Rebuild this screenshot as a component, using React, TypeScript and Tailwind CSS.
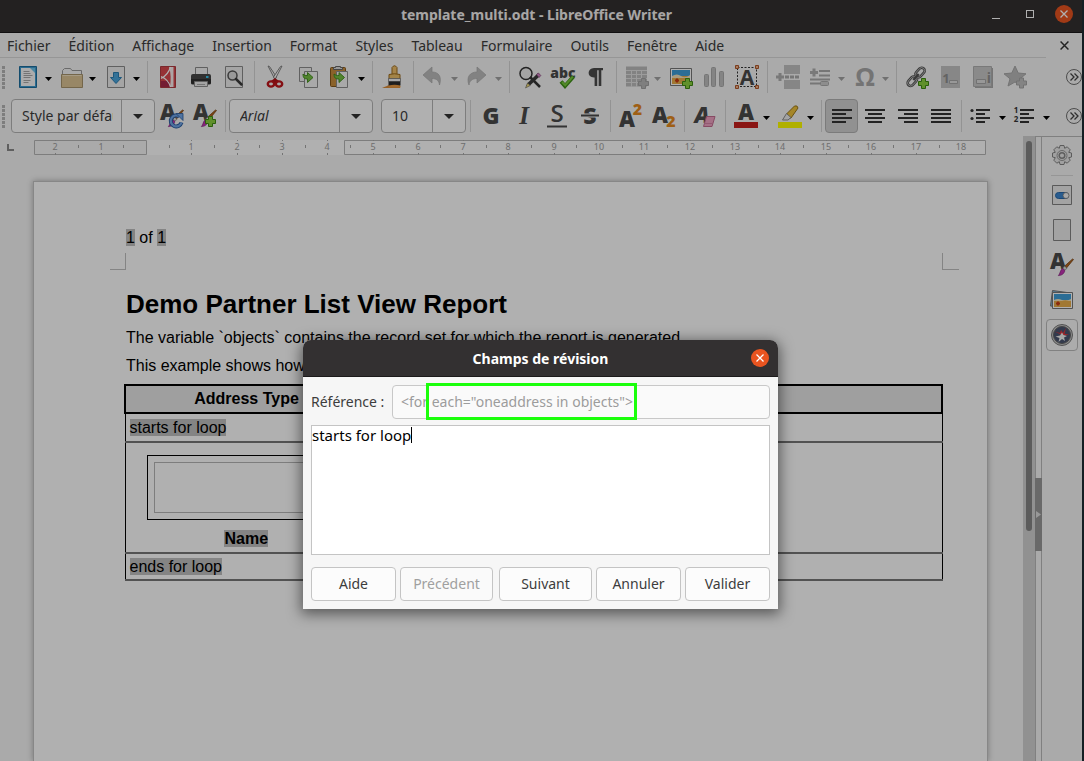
import React, { ReactNode } from 'react';

const INK = '#4a4a4a';

function Icon({ children }: { children: ReactNode }) {
  return (
    <svg width="24" height="24" viewBox="0 0 24 24" fill="none" className="shrink-0 overflow-visible" aria-hidden="true">
      {children}
    </svg>
  );
}

function Glyph({ x, y, size, fill = INK, italic = false, weight = 700, children }: {
  x: number; y: number; size: number; fill?: string; italic?: boolean; weight?: number; children: string;
}) {
  return (
    <text x={x} y={y} fontSize={size} fill={fill} fontWeight={weight} fontStyle={italic ? 'italic' : 'normal'} textAnchor="middle" fontFamily="'Open Sans', 'Noto Sans', sans-serif">
      {children}
    </text>
  );
}

function Plus({ x, y, fill = '#8bd13f', stroke = '#3f8a14' }: { x: number; y: number; fill?: string; stroke?: string }) {
  return (
    <path transform={`translate(${x} ${y})`} d="M3.5.5h4v3h3v4h-3v3h-4v-3h-3v-4h3z" fill={fill} stroke={stroke} />
  );
}

function Brush() {
  return (
    <g>
      <path d="M23.5 6.5l-7 8.5-2-1.8 8-7.2z" fill="#b8651b" stroke="#6b3a0c" strokeWidth=".7" />
      <path d="M14.5 13l2.5 2.2-2 2-2.4-2z" fill="#ddd" stroke="#666" strokeWidth=".6" />
      <path d="M12.6 15.6l2.3 2c-1 4-4 4.800-6.600 5 2-1.500 1.500-5.500 4.300-7z" fill="#c433b5" stroke="#7b1f72" strokeWidth=".6" />
    </g>
  );
}

const icons: Record<string, ReactNode> = {
  new: (
    <Icon>
      <path d="M3.500 1.500h17v21h-17z" fill="#3f9bd0" stroke="#1d6f9f" />
      <path d="M5 3h10l4 4v14H5z" fill="#fafafa" />
      <path d="M14 3h5v5z" fill="#6fc4ea" />
      <path d="M7.500 6.500h6M7.500 8.500h7M7.500 10.500h9M7.500 12.500h7M7.500 15.500h7M7.500 17.500h5" stroke="#a8a8a8" />
    </Icon>
  ),
  open: (
    <Icon>
      <path d="M2.500 20V5.500l2-2h6l1.500 2h9.500V20z" fill="#f5f5f5" stroke="#9a9a9a" />
      <path d="M1.500 9.500h21v13h-21z" fill="#dcc494" stroke="#a8946c" />
      <path d="M2.500 10.500h19" stroke="#efe0c0" />
    </Icon>
  ),
  save: (
    <Icon>
      <path d="M3.500 1.500h17v21h-17z" fill="#efefef" stroke="#8c8c8c" />
      <path d="M9.500 7.500h5v5h3L12 18.500 6.500 12.500h3z" fill="#4aa5dc" stroke="#2a7eb3" />
    </Icon>
  ),
  pdf: (
    <Icon>
      <path d="M4.500 1.500h15v21h-15z" fill="#d9484d" stroke="#b03c42" />
      <path d="M5 16h8l1 6H5z" fill="#a92b4a" />
      <path d="M13 2h4v20h-3C15 15 15 8 13 2z" fill="#fbeeee" />
      <path d="M17.500 2v20" stroke="#e79a9c" />
      <path d="M5 13.500C10 11 13 7 14.500 2M5 11.500c5 2 8 5 9.500 10.500" stroke="#fff" strokeWidth="1.200" />
    </Icon>
  ),
  print: (
    <Icon>
      <path d="M6.500 2.500h12v8h-12z" fill="#f3f3f3" stroke="#8b8b8b" />
      <rect x="2" y="9" width="20" height="10" rx="2" fill="#474747" />
      <path d="M2 14h20v4q0 1.500-2 1.500H4q-2 0-2-1.500z" fill="#303030" />
      <rect x="17" y="11" width="2.500" height="2" fill="#3cc7ef" />
      <path d="M5.500 16.500h13v5h-13z" fill="#ededed" stroke="#8d8d8d" />
      <path d="M8 19.500h8" stroke="#aaa" />
    </Icon>
  ),
  preview: (
    <Icon>
      <path d="M3.500 1.500h17v21h-17z" fill="#efefef" stroke="#8c8c8c" />
      <circle cx="10.500" cy="10.500" r="4.500" fill="#dedede" stroke="#555" strokeWidth="1.500" />
      <path d="M14 14l5.500 5.500" stroke="#3c3c3c" strokeWidth="2.500" strokeLinecap="round" />
    </Icon>
  ),
  cut: (
    <Icon>
      <path d="M5 1l7 13.500 1.500-2.500L6.500 1.500z" fill="#eee" stroke="#777" strokeWidth=".9" />
      <path d="M19 1l-7 13.500L10.500 12l7-10.500z" fill="#fafafa" stroke="#777" strokeWidth=".9" />
      <path d="M8 16l4-3 4 3-2 2h-4z" fill="#b21319" />
      <ellipse cx="8" cy="19" rx="3.200" ry="2.600" stroke="#c0161c" strokeWidth="2.400" />
      <ellipse cx="16" cy="19" rx="3.200" ry="2.600" stroke="#c0161c" strokeWidth="2.400" />
    </Icon>
  ),
  copy: (
    <Icon>
      <path d="M3.500 2.500h12v14h-12z" fill="#f2f2f2" stroke="#8d8d8d" />
      <path d="M8.500 6.500h13v16h-13z" fill="#f5f5f5" stroke="#8d8d8d" />
      <path d="M7 9c0 4 1.500 5 4.500 5v3.500l5.500-5-5.500-5v3C9 10.500 8.500 10.500 7 9z" fill="#76c043" stroke="#3d8a17" strokeWidth=".9" />
    </Icon>
  ),
  paste: (
    <Icon>
      <rect x="1.500" y="2.500" width="15" height="19" rx="1" fill="#c98e3e" stroke="#85571c" />
      <path d="M4.500 4.500v-2h2v-1h5v1h2v2z" fill="#ddd" stroke="#666" />
      <path d="M7.500 6.500h11v16h-11z" fill="#f5f5f5" stroke="#8d8d8d" />
      <path d="M5 9c0 4 1.500 5 5 5v3.500l5.500-5-5.500-5v3C8 10.500 7 10.500 5 9z" fill="#76c043" stroke="#3d8a17" strokeWidth=".9" />
    </Icon>
  ),
  clone: (
    <Icon>
      <path d="M1 23c3-1 6-3 8-3h10v3z" fill="#d98a35" />
      <path d="M11 9.500V2.500q2.500-3.500 5 0v7z" fill="#efc06a" stroke="#9d6b1c" />
      <path d="M8 14v-4.500q5.500-1.500 11 0V14z" fill="#ecc069" stroke="#9d6b1c" />
      <path d="M7.500 13.500h12v3h-12z" fill="#f3f3f3" stroke="#777" strokeWidth=".8" />
      <path d="M7.500 16.500h12v4h-12z" fill="#2c2c2c" />
      <path d="M7.500 21q6-2.500 12 0v1.500h-12z" fill="#eb9a40" />
    </Icon>
  ),
  undo: (
    <Icon>
      <path d="M1 10l9-8v5c7 0 10 5 7.500 13-.5-4-2.500-6.500-7.500-6.500V18z" fill="#bdbdbd" stroke="#aaa" strokeWidth=".7" />
    </Icon>
  ),
  redo: (
    <Icon>
      <path d="M20 10l-9-8v5C4 7 0 12 3 20c.500-4 3-6.500 8-6.500V18z" fill="#bdbdbd" stroke="#aaa" strokeWidth=".7" />
    </Icon>
  ),
  find: (
    <Icon>
      <circle cx="8" cy="8.500" r="6" fill="#eee" stroke="#333" strokeWidth="1.500" />
      <path d="M12 12l10 10" stroke="#333" strokeWidth="2.500" />
      <path d="M20 8l2.500 2.500L12 20.500 8 22l1.500-4z" fill="#3a3a3a" />
      <path d="M18.500 9.500L20.500 8l2.300 2.500-1.700 2z" fill="#d386c4" stroke="#8e4f83" strokeWidth=".7" />
      <path d="M9.500 18l2.800 2.500-4.800 2.500z" fill="#f0db7a" stroke="#555" strokeWidth=".5" />
    </Icon>
  ),
  spell: (
    <Icon>
      <Glyph x={12} y={13} size={14} weight={800}>abc</Glyph>
      <path d="M10 16.500l4 4.500 8.500-9.500" stroke="#3f8f18" strokeWidth="4" />
      <path d="M11 17l3.200 3.200 7.600-8.500" stroke="#79c83c" strokeWidth="2" />
    </Icon>
  ),
  pilcrow: (
    <Icon>
      <path d="M19 3v2.300h-1.700V21h-2.600V5.300h-1.500V21h-2.600v-8.500C2.500 13 3 3 10 3z" fill="#4c4c4c" />
    </Icon>
  ),
  table: (
    <Icon>
      <path d="M1 1.500h21v20H1z" fill="#bdbdbd" />
      <path d="M1 5.500h21M1 9.500h21M1 13.500h21M1 17.500h21M6.500 5v17M11.500 5v17M16.500 5v17" stroke="#e2e2e2" />
      <Plus x={13} y={13} fill="#b8b8b8" stroke="#a2a2a2" />
    </Icon>
  ),
  image: (
    <Icon>
      <path d="M1.500 3.500h21v17h-21z" fill="#fff" stroke="#777" />
      <path d="M3 5h18v14H3z" fill="#e9ae4b" />
      <path d="M3 5h18v6H3z" fill="#3f9ed8" />
      <path d="M3 11q5-3 9 0t9-1v3H3z" fill="#f4e3ba" />
      <path d="M8 13.500v4M6 15.500h4" stroke="#c93a12" strokeWidth="2" />
      <Plus x={13} y={13} />
    </Icon>
  ),
  chart: (
    <Icon>
      <g fill="#c0c0c0" stroke="#aaa"><rect x="2.500" y="9.500" width="4" height="12" rx="1" /><rect x="9.500" y="2.500" width="4" height="19" rx="1" /><rect x="17.500" y="6.500" width="4" height="15" rx="1" /></g>
    </Icon>
  ),
  textbox: (
    <Icon>
      <path d="M2.500 2.500h19v19h-19z" stroke="#333" strokeDasharray="2 1.500" />
      <Glyph x={12} y={20} size={21}>A</Glyph>
      <g fill="#f0b48a" stroke="#b3582a"><path d="M.5.5h3v3h-3zM20.500.5h3v3h-3zM.5 20.500h3v3h-3zM20.500 20.500h3v3h-3z" /></g>
    </Icon>
  ),
  pagebreak: (
    <Icon>
      <path d="M8 0h16v9H8zM8 15h16v9H8z" fill="#c2c2c2" />
      <path d="M0 12h8M4 8v8" stroke="#b0b0b0" strokeWidth="3" />
      <path d="M9 12h15" stroke="#ababab" strokeWidth="3" strokeDasharray="4 1" />
    </Icon>
  ),
  field: (
    <Icon>
      <path d="M1 7.500h8M5 3.500v8" stroke="#b0b0b0" strokeWidth="3" />
      <path d="M10 6h11M10 10.500h11M1 14.500h20M1 18.500h10" stroke="#ababab" strokeWidth="2" />
      <rect x="11.500" y="16.500" width="8" height="4" rx="1" fill="#ccc" stroke="#ababab" />
    </Icon>
  ),
  omega: <Icon><Glyph x={12} y={21} size={25} fill="#a9a9a9">Ω</Glyph></Icon>,
  link: (
    <Icon>
      <g transform="rotate(-48 11 12)" fill="none">
        <rect x="0" y="9" width="11" height="6" rx="3" stroke="#555" strokeWidth="2.600" />
        <rect x="11.500" y="9" width="11" height="6" rx="3" stroke="#555" strokeWidth="2.600" />
        <rect x="0" y="9" width="11" height="6" rx="3" stroke="#ccc" strokeWidth=".8" />
        <rect x="11.500" y="9" width="11" height="6" rx="3" stroke="#ccc" strokeWidth=".8" />
        <path d="M7 12h8" stroke="#555" strokeWidth="2.500" />
      </g>
      <Plus x={13} y={13} />
    </Icon>
  ),
  footnote: (
    <Icon>
      <path d="M3 1h19v22H3z" fill="#c4c4c4" />
      <Glyph x={8} y={18} size={13} fill="#909090">1</Glyph>
      <path d="M11.500 15.500h8v3h-8z" fill="#ddd" stroke="#a5a5a5" />
    </Icon>
  ),
  endnote: (
    <Icon>
      <path d="M4 3h18v20H4z" fill="#aaa" />
      <path d="M2.500 1.500h18v20h-18z" fill="#c8c8c8" stroke="#b0b0b0" />
      <path d="M5.500 14.500h9v4h-9z" fill="#ddd" stroke="#a5a5a5" />
      <Glyph x={18} y={18} size={14} fill="#909090">i</Glyph>
    </Icon>
  ),
  star: (
    <Icon>
      <path d="M11 1l3.200 7 7.800.8-6 5 2 7.200-7-4-7 4 2-7.200-6-5L7.800 8z" fill="#bababa" stroke="#a9a9a9" />
      <Plus x={12} y={12.500} fill="#c0c0c0" stroke="#a5a5a5" />
    </Icon>
  ),
  updateStyle: (
    <Icon>
      <Glyph x={8} y={16} size={22} weight={800}>A</Glyph>
      <Brush />
      <path d="M19.500 12.500A5.500 5.500 0 1 0 21.500 18.500" stroke="#295c9f" strokeWidth="4" />
      <path d="M19.500 12.500A5.500 5.500 0 1 0 21.500 18.500" stroke="#73a7e8" strokeWidth="2.200" />
      <path d="M16 9.500h7v7z" fill="#73a7e8" stroke="#295c9f" strokeWidth=".8" />
    </Icon>
  ),
  newStyle: (
    <Icon>
      <Glyph x={8} y={16} size={22} weight={800}>A</Glyph>
      <Brush />
      <Plus x={12} y={12} />
    </Icon>
  ),
  bold: <Icon><Glyph x={12} y={20} size={23} weight={800}>G</Glyph></Icon>,
  italic: (
    <Icon>
      <text x="12" y="20" fontSize="25" fill={INK} fontWeight="700" fontStyle="italic" textAnchor="middle" fontFamily="'Liberation Serif', serif">I</text>
    </Icon>
  ),
  underline: (
    <Icon><Glyph x={12} y={18} size={24} weight={600}>S</Glyph><path d="M2 22.500h20" stroke={INK} strokeWidth="2" /></Icon>
  ),
  strike: (
    <Icon>
      <Glyph x={12} y={20} size={23} weight={800}>S</Glyph>
      <path d="M3 11.500h18" stroke="#f6f6f6" strokeWidth="4" /><path d="M3 11.500h18" stroke={INK} strokeWidth="2" />
    </Icon>
  ),
  superscript: (
    <Icon>
      <Glyph x={8} y={23} size={22} weight={800}>A</Glyph><Glyph x={18.5} y={11} size={16} fill="#e58a1f" weight={800}>2</Glyph>
    </Icon>
  ),
  subscript: (
    <Icon>
      <Glyph x={8} y={19} size={22} weight={800}>A</Glyph><Glyph x={19} y={23} size={16} fill="#e58a1f" weight={800}>2</Glyph>
    </Icon>
  ),
  eraser: (
    <Icon>
      <Glyph x={9} y={19} size={22} italic weight={800}>A</Glyph>
      <path d="M13.500 12.500h8.500l-3 10h-8.500z" fill="#f0a3c2" stroke="#c36c90" />
      <path d="M11.500 19.500h8" stroke="#d483a5" />
    </Icon>
  ),
  fontColor: (
    <Icon><Glyph x={12} y={16} size={22} weight={800}>A</Glyph><path d="M0 18h24v6H0z" fill="#c9211e" /></Icon>
  ),
  highlight: (
    <Icon>
      <path d="M8.500 10l8-8q3-1 3.500 2l-7 10-3 0z" fill="#f0c23a" stroke="#9b781a" />
      <path d="M8.500 9.500l4.500 4-3 2.500H4.500z" fill="#eee" stroke="#8b8b8b" />
      <path d="M0 18h24v6H0z" fill="#ffff00" />
    </Icon>
  ),
  left: <Icon><path d="M2 6h20M2 10h14M2 14h20M2 18h14" stroke="#333" strokeWidth="2" /></Icon>,
  center: <Icon><path d="M2 6h20M5 10h14M2 14h20M5 18h14" stroke="#333" strokeWidth="2" /></Icon>,
  right: <Icon><path d="M2 6h20M8 10h14M2 14h20M8 18h14" stroke="#333" strokeWidth="2" /></Icon>,
  justify: <Icon><path d="M2 6h20M2 10h20M2 14h20M2 18h20" stroke="#333" strokeWidth="2" /></Icon>,
  bullets: (
    <Icon>
      <path d="M6 6h14M6 10h9M6 14h14M6 18h9" stroke="#333" strokeWidth="2" />
      <circle cx="2" cy="6.500" r="1.600" fill="#333" /><circle cx="2" cy="14.500" r="1.600" fill="#333" />
    </Icon>
  ),
  numbers: (
    <Icon>
      <path d="M6 6h14M6 10h9M6 14h14M6 18h9" stroke="#333" strokeWidth="2" />
      <Glyph x={2} y={9} size={8} fill="#333">1</Glyph><Glyph x={2} y={18} size={8} fill="#333">2</Glyph>
    </Icon>
  ),
  settings: (
    <Icon>
      <path d="M10 1.500h4l.7 2.800 2.500-1.500 3 3-1.500 2.500 2.800.7v4l-2.800.7 1.500 2.500-3 3-2.500-1.500-.7 2.800h-4l-.7-2.800-2.500 1.500-3-3 1.500-2.500-2.800-.7V9l2.800-.7-1.500-2.500 3-3 2.500 1.500z" fill="#e8e8e8" stroke="#858585" />
      <circle cx="12" cy="11.500" r="5" stroke="#999" /><circle cx="12" cy="11.500" r="2.800" stroke="#888" strokeWidth="1.500" />
    </Icon>
  ),
  properties: (
    <Icon>
      <path d="M2.500 2.500h19v19h-19z" fill="#ececec" stroke="#828282" />
      <rect x="5.500" y="9.500" width="13" height="6" rx="3" fill="#3c86cf" stroke="#2868a8" /><circle cx="16" cy="12.500" r="3" fill="#f4f4f4" stroke="#777" strokeWidth=".8" />
    </Icon>
  ),
  page: <Icon><path d="M3.500 1.500h17v21h-17z" fill="#ededed" stroke="#858585" /></Icon>,
  styles: <Icon><Glyph x={8} y={16} size={22} weight={800}>A</Glyph><Brush /></Icon>,
  gallery: (
    <Icon>
      <path d="M2.500 2.500l18 2.500-2 15-18-2z" fill="#7fb9dc" stroke="#777" />
      <path d="M2.500 4.500h20v16h-20z" fill="#fff" stroke="#777" />
      <path d="M4 6h17v13H4z" fill="#e9ae4b" /><path d="M4 6h17v6H4z" fill="#3f9ed8" />
      <path d="M4 12q4-2 8 0t9-1v2H4z" fill="#f4e3ba" /><path d="M8 13.500v4M6 15.500h4" stroke="#c93a12" strokeWidth="1.800" />
    </Icon>
  ),
  navigator: (
    <Icon>
      <circle cx="12" cy="12" r="10.500" fill="#c8c8c8" stroke="#777" /><circle cx="12" cy="12" r="8.500" fill="#4a5570" stroke="#666" />
      <path d="M10 11L4.500 8.500 10 10l1-3 2 3 3-5-1.500 6 4.500 0-4 1.500z" fill="#e0333a" />
      <path d="M12 9.500l1.500 2.500 3.500 1-3 1.500 1 3.500-3-2-3.500 3 1-4-4-1.500 4.500-1z" fill="#f2f2f2" />
    </Icon>
  ),
};

function ToolButton({ name, label, active = false, disabled = false }: { name: string; label: string; active?: boolean; disabled?: boolean }) {
  return (
    <button
      type="button"
      aria-label={label}
      disabled={disabled}
      className={`flex h-[34px] w-[33px] shrink-0 items-center justify-center rounded ${active ? 'border border-[#b3b3b3] bg-[#d2d2d2]' : ''}`}
    >
      {icons[name]}
    </button>
  );
}

function DropArrow({ label, muted = false }: { label: string; muted?: boolean }) {
  return (
    <button type="button" aria-label={label} disabled={muted} className="flex h-8 w-[11px] shrink-0 items-center justify-start pt-1 pl-px">
      <svg width="7" height="4" viewBox="0 0 7 4" aria-hidden="true"><path d="M0 0h7L3.500 4z" fill={muted ? '#a3a3a3' : '#000'} /></svg>
    </button>
  );
}

function Separator() {
  return <div className="mr-[3px] ml-1 h-8 w-px shrink-0 bg-[#d6d6d6]" />;
}

function Grip() {
  return (
    <div className="flex w-[11px] shrink-0 flex-col gap-px pl-0.5">
      {[0, 1, 2, 3, 4, 5].map((i) => <span key={i} className="h-[3px] w-[3px] bg-[#b5b5b5]" />)}
    </div>
  );
}

function Overflow({ label }: { label: string }) {
  return (
    <button type="button" aria-label={label} className="ml-auto shrink-0">
      <svg width="16" height="16" viewBox="0 0 16 16" fill="none" aria-hidden="true">
        <circle cx="8" cy="8" r="7.500" stroke="#6f6f6f" />
        <path d="M4.500 4.500L8 8l-3.500 3.500M8.500 4.500L12 8l-3.500 3.500" stroke="#444" strokeWidth="1.300" />
      </svg>
    </button>
  );
}

function Combo({ label, value, field, italic = false }: { label: string; value: string; field: string; italic?: boolean }) {
  return (
    <div className="flex h-[34px] shrink-0 rounded border border-[#b6b6b6] bg-white text-sm text-[#3d3d3d]">
      <div className={`${field} border-r border-[#b6b6b6] pr-2 pb-0.5 pl-2.5`}>
        <input aria-label={label} defaultValue={value} className={`h-full w-full bg-transparent outline-none ${italic ? 'italic' : ''}`} />
      </div>
      <button type="button" aria-label={`${label} : liste`} className="flex w-8 items-center justify-center">
        <svg width="10" height="5" viewBox="0 0 10 5" aria-hidden="true"><path d="M0 0h10L5 5z" fill="#333" /></svg>
      </button>
    </div>
  );
}

function Ruler() {
  const zero = 112;
  const step = 45.3;
  const numbers = [-2, -1, ...Array.from({ length: 18 }, (_, i) => i + 1)];
  return (
    <svg width="952" height="15" viewBox="0 0 952 15" className="shrink-0" fill="none" aria-label="Règle">
      <path d="M0 0h952v15H0z" fill="#fff" />
      <path d="M.5.5h112v14H.5z" fill="#f6f6f6" stroke="#b6b6b6" />
      <path d="M310.500.5h641v14h-641z" stroke="#b6b6b6" />
      {numbers.map((n) => {
        const x = Math.round(zero + n * step);
        return (
          <g key={n}>
            <text x={x} y="10" fontSize="9" fill="#a0a0a0" textAnchor="middle" fontFamily="'Noto Sans', sans-serif">{Math.abs(n)}</text>
            <path d={`M${x}.5 13v2M${x}.5 0v1`} stroke="#a8a8a8" />
          </g>
        );
      })}
      {Array.from({ length: 20 }, (_, i) => Math.round(zero + (i - 1.5) * step)).map((x) => (
        <path key={x} d={`M${x}.5 5v3`} stroke="#a8a8a8" />
      ))}
    </svg>
  );
}

const menus = ['Fichier', 'Édition', 'Affichage', 'Insertion', 'Format', 'Styles', 'Tableau', 'Formulaire', 'Outils', 'Fenêtre', 'Aide'];

function Cross({ size, color }: { size: number; color: string }) {
  return (
    <svg width={size} height={size} viewBox="0 0 8 8" fill="none" aria-hidden="true"><path d="M.5.5l7 7M7.500.5l-7 7" stroke={color} strokeWidth="1.300" /></svg>
  );
}

function TitleBar() {
  return (
    <header className="flex h-[33px] shrink-0 items-center border-b border-[#1a1819] bg-[#333031] pr-[9px] pb-1">
      <div className="w-[86px]" />
      <h1 className="flex-1 pt-0.5 text-center text-sm font-bold text-[#f3f1ef]">template_multi.odt - LibreOffice Writer</h1>
      <div className="flex w-[86px] items-center justify-end gap-4">
        <button type="button" aria-label="Réduire" className="flex h-[18px] w-[18px] items-end justify-center pb-1"><span className="h-px w-2 bg-white" /></button>
        <button type="button" aria-label="Agrandir" className="flex h-[18px] w-[18px] items-center justify-center"><span className="h-2 w-2 border border-white" /></button>
        <button type="button" aria-label="Fermer" className="flex h-[18px] w-[18px] shrink-0 items-center justify-center rounded-full bg-[#e95420]"><Cross size={8} color="#fff" /></button>
      </div>
    </header>
  );
}

function MenuBar() {
  return (
    <div className="flex h-[25px] shrink-0">
      <nav className="flex flex-1 gap-[18px] border-b border-[#dadada] pt-px pl-[7px] text-sm leading-6 text-[#3d3d3d]">
        {menus.map((m) => <button key={m} type="button">{m}</button>)}
      </nav>
      <button type="button" aria-label="Fermer le document" className="flex w-9 items-center justify-center"><Cross size={9} color="#333" /></button>
    </div>
  );
}

function StandardBar() {
  return (
    <div className="flex h-[38px] shrink-0 items-center">
      <Grip />
      <ToolButton name="new" label="Nouveau" /><DropArrow label="Types de document" />
      <ToolButton name="open" label="Ouvrir" /><DropArrow label="Fichiers récents" />
      <ToolButton name="save" label="Enregistrer" /><DropArrow label="Options d'enregistrement" />
      <Separator />
      <ToolButton name="pdf" label="Exporter en PDF" /><ToolButton name="print" label="Imprimer" /><ToolButton name="preview" label="Aperçu" />
      <Separator />
      <ToolButton name="cut" label="Couper" /><ToolButton name="copy" label="Copier" /><ToolButton name="paste" label="Coller" /><DropArrow label="Options de collage" />
      <Separator />
      <ToolButton name="clone" label="Cloner le formatage" />
      <Separator />
      <ToolButton name="undo" label="Annuler l'action" disabled /><DropArrow label="Actions à annuler" muted />
      <ToolButton name="redo" label="Rétablir" disabled /><DropArrow label="Actions à rétablir" muted />
      <Separator />
      <ToolButton name="find" label="Rechercher" /><ToolButton name="spell" label="Orthographe" /><ToolButton name="pilcrow" label="Marques de formatage" />
      <Separator />
      <ToolButton name="table" label="Tableau" disabled /><DropArrow label="Taille du tableau" muted />
      <ToolButton name="image" label="Image" /><ToolButton name="chart" label="Diagramme" disabled /><ToolButton name="textbox" label="Zone de texte" />
      <Separator />
      <ToolButton name="pagebreak" label="Saut de page" disabled />
      <ToolButton name="field" label="Champ" disabled /><DropArrow label="Types de champ" muted />
      <ToolButton name="omega" label="Caractère spécial" disabled /><DropArrow label="Caractères récents" muted />
      <Separator />
      <ToolButton name="link" label="Hyperlien" /><ToolButton name="footnote" label="Note de bas de page" disabled /><ToolButton name="endnote" label="Note de fin" disabled /><ToolButton name="star" label="Repère de texte" disabled />
      <Overflow label="Plus d'outils" />
    </div>
  );
}

function FormatBar() {
  return (
    <div className="flex h-10 shrink-0 items-center">
      <Grip />
      <Combo label="Style de paragraphe" value="Style par défaut" field="w-[110px]" />
      <ToolButton name="updateStyle" label="Actualiser le style" /><ToolButton name="newStyle" label="Nouveau style" />
      <Separator />
      <Combo label="Police" value="Arial" field="w-[110px]" italic />
      <div className="w-2 shrink-0" />
      <Combo label="Taille" value="10" field="w-[51px]" />
      <Separator />
      <ToolButton name="bold" label="Gras" /><ToolButton name="italic" label="Italique" /><ToolButton name="underline" label="Souligné" /><ToolButton name="strike" label="Barré" />
      <Separator />
      <ToolButton name="superscript" label="Exposant" /><ToolButton name="subscript" label="Indice" />
      <Separator />
      <ToolButton name="eraser" label="Effacer le formatage" />
      <Separator />
      <ToolButton name="fontColor" label="Couleur de police" /><DropArrow label="Choisir la couleur" />
      <ToolButton name="highlight" label="Surlignage" /><DropArrow label="Choisir le surlignage" />
      <Separator />
      <ToolButton name="left" label="Aligner à gauche" active /><ToolButton name="center" label="Centrer" /><ToolButton name="right" label="Aligner à droite" /><ToolButton name="justify" label="Justifier" />
      <Separator />
      <ToolButton name="bullets" label="Puces" /><DropArrow label="Styles de puces" />
      <ToolButton name="numbers" label="Numérotation" /><DropArrow label="Styles de numérotation" />
      <Overflow label="Plus de formatage" />
    </div>
  );
}

function Field({ children }: { children: string }) {
  return <span className="bg-[#bfbfbf]">{children}</span>;
}

function DocumentPage() {
  return (
    <article className="mr-[35px] ml-[33px] flex-1 border border-b-0 border-[#c4c4c4] bg-white pr-11 pl-[92px] font-['Liberation_Sans',Arial,sans-serif] text-base leading-[18px] text-black shadow-[0_0_6px_rgba(0,0,0,0.3)]">
      <p className="pt-[47px]"><Field>1</Field> of <Field>1</Field></p>
      <div className="-mx-4 mt-1.5 flex justify-between">
        <span className="h-[17px] w-4 border-r border-b border-[#c0c0c0]" />
        <span className="h-[17px] w-[17px] border-b border-l border-[#c0c0c0]" />
      </div>
      <h2 className="mt-[18px] text-[26px] leading-8 font-bold">Demo Partner List View Report</h2>
      <p className="mt-[9px]">The variable `objects` contains the record set for which the report is generated.</p>
      <p className="mt-2.5">This example shows how to loop over a record set.</p>
      <div className="mt-[9px] -ml-0.5">
        <table className="w-full border-collapse border border-black">
          <thead>
            <tr className="h-7 border-2 border-black bg-[#e6e6e6]">
              <th className="w-[242px] p-0">Address Type</th>
              <th className="p-0" />
            </tr>
          </thead>
          <tbody>
            <tr className="h-[29px] border-b-2 border-b-[#777]">
              <td colSpan={2} className="p-0 pl-1"><Field>starts for loop</Field></td>
            </tr>
            <tr className="h-[111px] border-b-2 border-b-[#777]">
              <td className="px-[21px] pt-3 pb-1 text-center align-top">
                <div className="mb-2.5 h-[65px] border border-black p-1.5"><div className="h-full border border-[#b5b5b5]" /></div>
                <strong><Field>Name</Field></strong>
              </td>
              <td className="p-0" />
            </tr>
            <tr className="h-[27px] border-b-2 border-b-[#777]">
              <td colSpan={2} className="p-0 pl-1"><Field>ends for loop</Field></td>
            </tr>
          </tbody>
        </table>
      </div>
    </article>
  );
}

function Sidebar() {
  return (
    <aside className="flex w-10 shrink-0 flex-col items-center gap-px border-t border-[#b8b8b8] pt-0.5 pr-px">
      <ToolButton name="settings" label="Paramètres de la barre latérale" />
      <div className="my-px h-px w-[22px] bg-[#dadada]" />
      <ToolButton name="properties" label="Propriétés" />
      <ToolButton name="page" label="Page" />
      <ToolButton name="styles" label="Styles" />
      <ToolButton name="gallery" label="Galerie" />
      <button type="button" aria-label="Navigateur" className="mt-px flex h-8 w-8 items-center justify-center rounded border border-[#bcbcbc] bg-[#fafafa]">{icons.navigator}</button>
    </aside>
  );
}

function CommentDialog() {
  return (
    <section role="dialog" aria-labelledby="dialog-title" className="w-[475px] rounded-t-lg bg-[#f6f6f6] text-sm text-[#3d3d3d] shadow-[0_3px_14px_2px_rgba(0,0,0,0.5)]">
      <header className="flex h-[37px] items-center rounded-t-lg border-b border-[#1c1a1b] bg-[#333031] pr-[9px] pl-[27px]">
        <h2 id="dialog-title" className="flex-1 pt-0.5 text-center font-bold text-white">Champs de révision</h2>
        <button type="button" aria-label="Fermer" className="flex h-[18px] w-[18px] items-center justify-center rounded-full bg-[#e95420]"><Cross size={8} color="#fff" /></button>
      </header>
      <div className="p-2">
        <div className="relative flex items-center justify-between">
          <label htmlFor="reference">Référence :</label>
          <input id="reference" disabled defaultValue={'<for each="oneaddress in objects">'} className="h-[34px] w-[378px] rounded border border-[#c8c8c8] bg-[#fafafa] px-2 pb-0.5 text-[#9c9c9c]" />
          <div className="pointer-events-none absolute -top-0.5 left-[115px] h-[37px] w-[211px] border-3 border-[#1bff0b]" />
        </div>
        <div className="relative mt-1.5">
          <textarea aria-label="Contenu" defaultValue="starts for loop" className="block h-[130px] w-full resize-none border border-[#c4c4c4] bg-white text-[15px] leading-[18px] text-black outline-none" />
          <span className="pointer-events-none absolute top-0.5 left-[100px] h-4 w-px bg-black" />
        </div>
        <div className="mt-3 flex justify-between">
          <div className="flex gap-1">
            <button type="button" className="h-[34px] w-[85px] rounded border border-[#c4c4c4] bg-[#fcfcfc]">Aide</button>
            <button type="button" disabled className="h-[34px] w-[93px] rounded border border-[#c4c4c4] bg-[#fafafa] text-[#a0a0a0]">Précédent</button>
          </div>
          <div className="flex gap-1">
            <button type="button" className="h-[34px] w-[93px] rounded border border-[#c4c4c4] bg-[#fcfcfc]">Suivant</button>
            <button type="button" className="h-[34px] w-[85px] rounded border border-[#c4c4c4] bg-[#fcfcfc]">Annuler</button>
            <button type="button" className="h-[34px] w-[85px] rounded border border-[#c4c4c4] bg-[#fcfcfc]">Valider</button>
          </div>
        </div>
      </div>
    </section>
  );
}

export default function App() {
  return (
    <div className="relative flex min-h-screen overflow-hidden bg-[#1e2c33] pr-0.5 font-['Noto_Sans','Open_Sans',sans-serif]">
      <div className="flex min-w-0 flex-1 flex-col bg-[#f6f6f6]">
        <TitleBar />
        <MenuBar />
        <StandardBar />
        <FormatBar />
        <main className="flex flex-1">
          <div className="flex min-w-0 flex-1 flex-col">
            <div className="mb-[26px] flex items-start pt-1">
              <svg width="34" height="14" viewBox="0 0 34 14" className="shrink-0" aria-hidden="true"><path d="M8 4v6h6" stroke="#8a8a8a" strokeWidth="2" fill="none" /></svg>
              <Ruler />
            </div>
            <DocumentPage />
          </div>
          <div className="w-3 shrink-0 bg-[#d2d2d2] px-[3px] pt-[5px]"><div className="h-[390px] rounded-full bg-[#868686]" /></div>
          <div className="flex w-[7px] shrink-0 flex-col border-x border-t border-[#bababa]">
            <div className="-mx-px mt-[341px] flex h-[73px] items-center justify-center bg-[#999]">
              <svg width="5" height="7" viewBox="0 0 5 7" aria-hidden="true"><path d="M0 0l5 3.500L0 7z" fill="#ddd" /></svg>
            </div>
          </div>
          <Sidebar />
        </main>
      </div>
      <div className="absolute inset-0 flex items-start justify-center bg-black/31 pt-[340px] pr-[3px]">
        <CommentDialog />
      </div>
    </div>
  );
}
